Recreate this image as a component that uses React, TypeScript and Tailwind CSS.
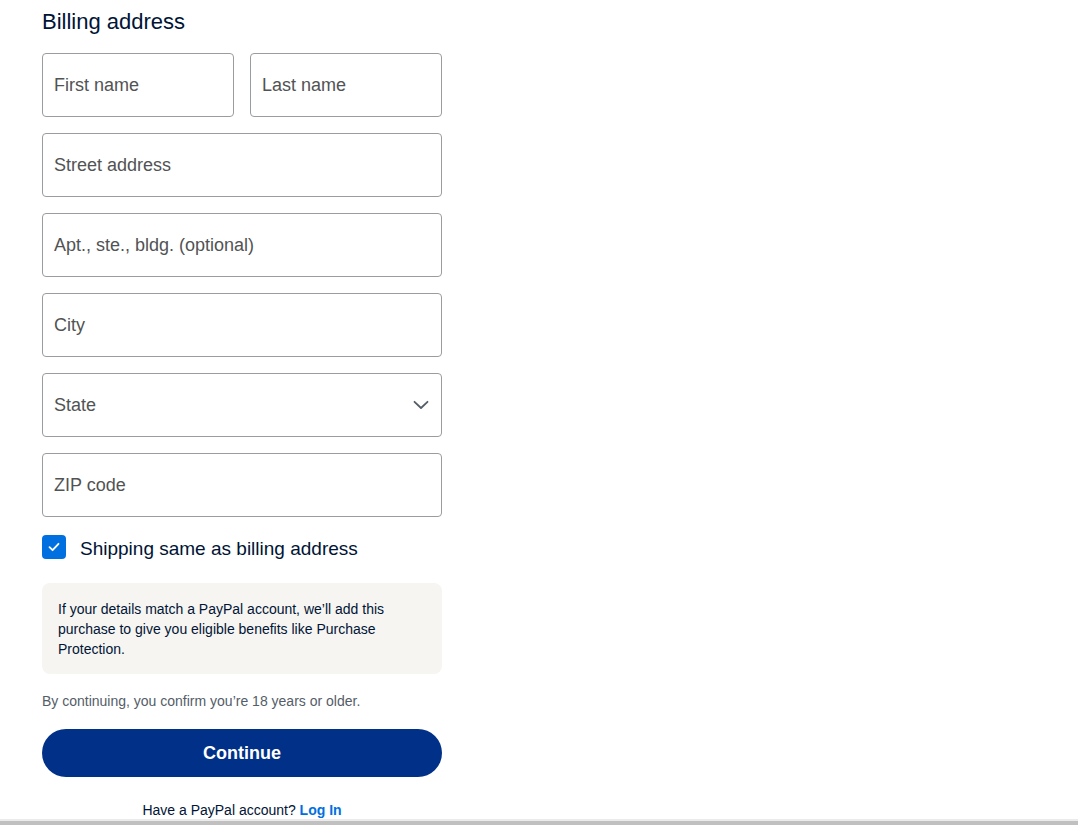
function Field({ label, className = "" }: { label: string; className?: string }) {
  return (
    <div className={"h-16 rounded-[4px] border border-[#999da1] flex items-center px-[11px] " + className}>
      <span className="text-[18px] text-[#515354]">{label}</span>
    </div>
  );
}

export default function App() {
  return (
    <div className="h-[825px] w-full overflow-hidden bg-white font-['Liberation_Sans',Arial,sans-serif] flex flex-col">
      <div className="w-[400px] ml-[42px] flex flex-col flex-1 min-h-0">
        <h2 className="mt-[9px] text-[22px] leading-[26px] text-[#001435]">Billing address</h2>

        <div className="mt-[18px] flex gap-4">
          <Field label="First name" className="flex-1" />
          <Field label="Last name" className="flex-1" />
        </div>

        <div className="mt-4 flex flex-col gap-4">
          <Field label="Street address" />
          <Field label="Apt., ste., bldg. (optional)" />
          <Field label="City" />
          <div className="h-16 rounded-[4px] border border-[#999da1] flex items-center justify-between px-[11px]">
            <span className="text-[18px] text-[#515354]">State</span>
            <svg width="16" height="10" viewBox="0 0 16 10" fill="none" className="mr-[1px]">
              <path d="M1.5 1.8 L8 8 L14.5 1.8" stroke="#545d68" strokeWidth="1.8" strokeLinecap="round" strokeLinejoin="round" />
            </svg>
          </div>
          <Field label="ZIP code" />
        </div>

        <label className="mt-[18px] h-6 flex items-center gap-[14px]">
          <span className="w-6 h-6 rounded-[4px] bg-[#0070e0] flex items-center justify-center">
            <svg width="14" height="14" viewBox="0 0 14 14" fill="none">
              <path d="M2.5 7.2 L5.6 10.2 L11.5 3.8" stroke="white" strokeWidth="1.8" strokeLinecap="round" strokeLinejoin="round" />
            </svg>
          </span>
          <span className="text-[19px] leading-6 pt-[3px] text-[#001435]">Shipping same as billing address</span>
        </label>

        <div className="mt-6 h-[92px] rounded-lg bg-[#f7f5f2] px-4 pt-[16px]">
          <p className="text-[14px] leading-[20px] text-[#001435] w-[340px]">
            If your details match a PayPal account, we’ll add this purchase to give you eligible benefits like Purchase Protection.
          </p>
        </div>

        <p className="mt-[18px] text-[14px] leading-[18px] text-[#545d68]">By continuing, you confirm you’re 18 years or older.</p>

        <button className="mt-[19px] h-12 shrink-0 rounded-full bg-[#003087] text-white text-[18px] font-bold">Continue</button>

        <p className="mt-[24px] text-center text-[14px] leading-[18px] text-[#001435]">
          Have a PayPal account? <span className="font-bold text-[#0070e0]">Log In</span>
        </p>
      </div>
      <div className="h-[2px] shrink-0 bg-[#ebebeb]" />
      <div className="h-[4px] shrink-0 bg-[#c0c0c0]" />
    </div>
  );
}
